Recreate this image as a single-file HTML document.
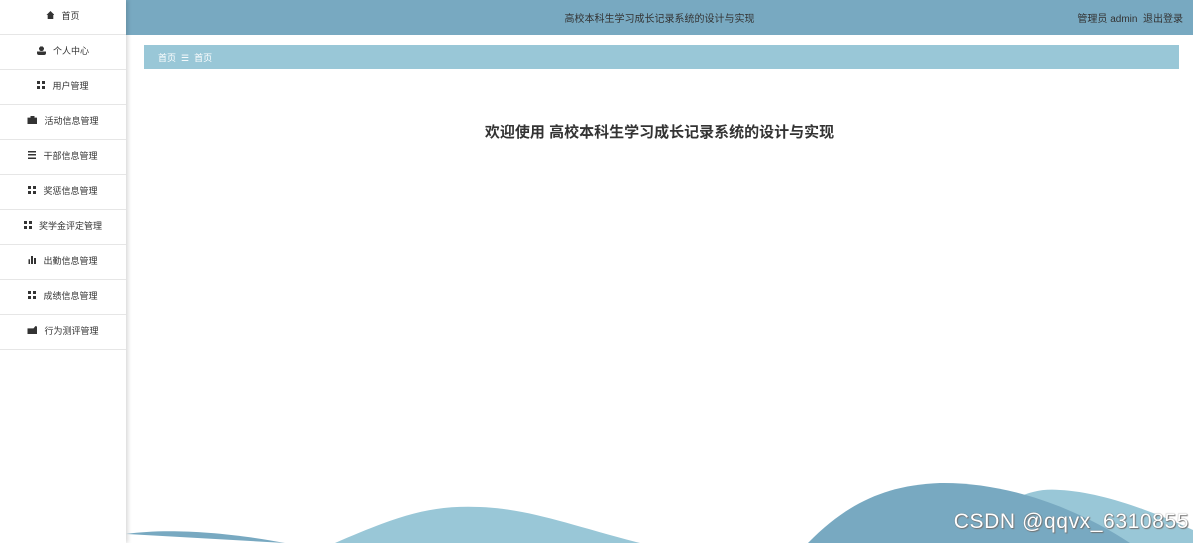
<!DOCTYPE html>
<html><head><meta charset="utf-8"><style>
*{margin:0;padding:0;box-sizing:border-box}
body{width:1193px;height:543px;overflow:hidden;background:#fff;font-family:"Liberation Sans","Noto Sans CJK SC",sans-serif;position:relative}
.side{position:absolute;left:0;top:0;width:126px;height:543px;background:#fff;box-shadow:2px 0 4px rgba(0,0,0,.15);z-index:2}
.item{height:35px;border-bottom:1px solid #e6e6e6;display:flex;align-items:center;justify-content:center;font-size:9px;color:#333;padding-bottom:4px}
.item i{display:inline-block;width:8px;height:8px;background:#333;margin-right:7px}
.g{background:conic-gradient(from 0deg,#333 0 0) !important;-webkit-mask:linear-gradient(90deg,#000 40%,transparent 40% 60%,#000 60%),linear-gradient(#000 40%,transparent 40% 60%,#000 60%);-webkit-mask-composite:source-in;mask-composite:intersect}
.top{position:absolute;left:126px;top:0;right:0;height:35px;background:#78a9c1;color:#333;font-size:10px}
.top .t{position:absolute;left:0;right:0;text-align:center;top:10px}
.top .r{position:absolute;right:10px;top:10px}
.bc{position:absolute;left:144px;top:45px;width:1035px;height:24px;background:#99c7d7;color:#fff;font-size:9px;padding:6px 14px}
h1{position:absolute;left:126px;right:0;top:121px;text-align:center;font-size:15px;color:#333;font-weight:bold}
.wm{position:absolute;right:4px;top:510px;font-size:21px;color:#fff;letter-spacing:0.6px;text-shadow:0 0 1px #555,1px 1px 1px #777;z-index:3}
</style></head><body>
<div class="side">
<div class="item"><i style="clip-path:polygon(50% 0,100% 50%,85% 50%,85% 100%,15% 100%,15% 50%,0 50%)"></i>首页</div>
<div class="item"><i style="clip-path:circle(30% at 50% 30%);width:9px;height:9px;background:radial-gradient(circle at 50% 30%,#333 30%,transparent 32%),linear-gradient(transparent 62%,#333 62%) !important;clip-path:none;border-radius:2px"></i>个人中心</div>
<div class="item"><i class="g"></i>用户管理</div>
<div class="item"><i style="width:10px;clip-path:polygon(30% 0,70% 0,70% 20%,100% 20%,100% 100%,0 100%,0 20%,30% 20%)"></i>活动信息管理</div>
<div class="item"><i style="background:repeating-linear-gradient(#333 0 1.5px,transparent 1.5px 3.2px)"></i>干部信息管理</div>
<div class="item"><i class="g"></i>奖惩信息管理</div>
<div class="item"><i class="g"></i>奖学金评定管理</div>
<div class="item"><i style="background:linear-gradient(90deg,#333 25%,transparent 25% 37%,#333 37% 62%,transparent 62% 75%,#333 75%);clip-path:polygon(0 40%,25% 40%,25% 0,62% 0,62% 25%,100% 25%,100% 100%,0 100%)"></i>出勤信息管理</div>
<div class="item"><i class="g"></i>成绩信息管理</div>
<div class="item"><i style="width:10px;clip-path:polygon(0 30%,60% 30%,80% 0,100% 10%,100% 100%,0 100%)"></i>行为测评管理</div>
</div>
<div class="top"><div class="t">高校本科生学习成长记录系统的设计与实现</div><div class="r">管理员 admin &nbsp;退出登录</div></div>
<div class="bc">首页 &nbsp;☰ &nbsp;首页</div>
<h1>欢迎使用 高校本科生学习成长记录系统的设计与实现</h1>
<svg style="position:absolute;left:0;top:0" width="1193" height="543">
<path d="M126 534 C160 529 215 530 285 543 Z" fill="#78a9c1"/>
<path d="M335 543 C400 515 430 505 480 507 C530 509 570 525 640 543 Z" fill="#99c7d7"/>
<path d="M995 510 C1020 495 1035 488 1060 490 C1100 492 1150 510 1193 530 L1193 543 L1000 543 Z" fill="#99c7d7"/>
<path d="M808 543 C850 500 890 485 940 483 C1010 482 1080 510 1130 543 Z" fill="#78a9c1"/>
</svg>
<div class="wm">CSDN @qqvx_6310855</div>
</body></html>
